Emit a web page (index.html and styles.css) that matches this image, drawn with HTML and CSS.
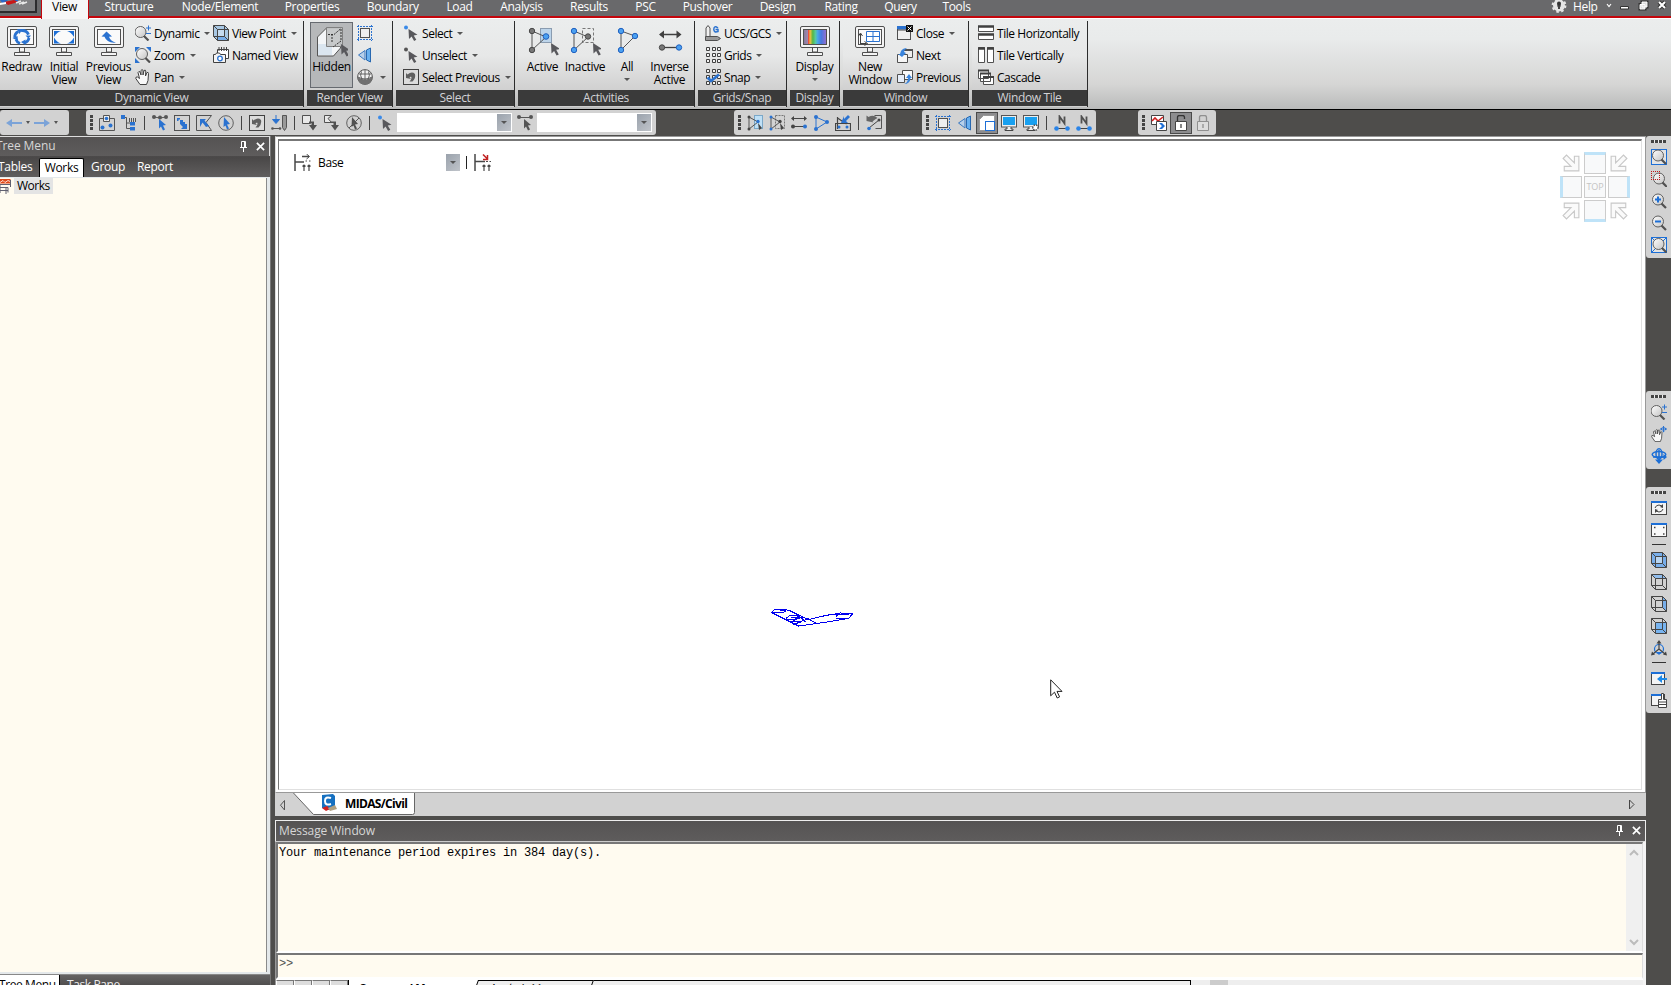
FILE: index.html
```html
<!DOCTYPE html>
<html lang="en">
<head>
<meta charset="utf-8">
<title>MIDAS/Civil</title>
<link rel="stylesheet" href="styles.css">
</head>
<body>
<svg class="defs" width="0" height="0">
<defs>
<linearGradient id="gl" x1="0" y1="0" x2="1" y2="1"><stop offset="0" stop-color="#fff"/><stop offset="1" stop-color="#c4c4c4"/></linearGradient>
<linearGradient id="rain" x1="0" x2="1" y1="0" y2="0"><stop offset="0" stop-color="#8a7a9c"/><stop offset=".18" stop-color="#a08ab0"/><stop offset=".2" stop-color="#e84a3c"/><stop offset=".28" stop-color="#f0c040"/><stop offset=".4" stop-color="#50b848"/><stop offset=".52" stop-color="#58c8a0"/><stop offset=".62" stop-color="#48a8e8"/><stop offset=".78" stop-color="#4878e0"/><stop offset="1" stop-color="#9070d0"/></linearGradient>
<g id="mon"><rect x=".5" y=".5" width="29" height="21" rx="1.500" fill="#f4f4f4" stroke="#505050"/><rect x="3.500" y="3.500" width="23" height="15" fill="#fafafa" stroke="#505050"/><path d="M12.500 22v4h5v-4M7.500 26.500h15v3h-15z" fill="#f4f4f4" stroke="#505050"/></g>
<g id="mag"><circle cx="7" cy="6.500" r="5.500" fill="url(#gl)" stroke="#606060"/><path d="M10.500 10.500l4.500 4.500" stroke="#505050" stroke-width="2.200"/></g>
<path id="cur" d="M0 0l9 6-3.800.8 2.600 4.600-2.200 1.200-2.500-4.700L.5 10.500z" fill="#58585c"/>
<g id="cube" fill="none" stroke="#454545"><path d="M.5.500h11l4 4v11h-11l-4-4z"/><path d="M4.500 4.500h11M4.500 4.500v11M4.500 4.500l-4-4M.5 11.500h11V.500M11.500 11.500l4 4"/></g>
</defs>
<symbol id="i-redraw" viewBox="0 0 30 30"><use href="#mon"/><path d="M7.800 11.500a7 6.500 0 0 1 3.500-6M14 4.600a7 6.500 0 0 1 7.500 4M22 12a7 6.500 0 0 1-4.500 5M13 17.500a7 6.500 0 0 1-4-4" fill="none" stroke="#2a72d0" stroke-width="2.800"/><path d="M10 3h5.500l-3 5zM18.500 9.500h5.500l-2.500 3zM18.500 13.500v5.500l-4.500-3zM5.500 12l5-2 .5 5z" fill="#2a72d0"/></symbol>
<symbol id="i-initial" viewBox="0 0 30 30"><use href="#mon"/><path d="M5 5h7q-4 1-7 6zM25 5h-7q4 1 7 6zM5 17.500h7q-4-1-7-6zM25 17.500h-7q4-1 7-6z" fill="#1d6fd6"/></symbol>
<symbol id="i-prev" viewBox="0 0 30 30"><use href="#mon"/><path d="M7.500 10.500l5-5 5.500 5-3 .3q1.500 4.500 7 5.700-9 1-11.500-5.700z" fill="#2a72d0"/></symbol>
<symbol id="i-display" viewBox="0 0 30 30"><use href="#mon"/><rect x="4" y="4" width="22" height="14" fill="url(#rain)"/></symbol>
<symbol id="i-newwin" viewBox="0 0 30 30"><use href="#mon"/><path d="M11.500 5.500h13v10h-13zM18 5.500v10M11.500 10.500h13" fill="#fff" stroke="#2a72d0"/><path d="M5.500 18V8m-2 2l2-3 2 3M5.500 17.500h6m-2-2l3 2-3 2" fill="none" stroke="#404040"/></symbol>
<symbol id="i-hidden" viewBox="0 0 32 32"><path d="M1.500 11l9-9h14v20l-7 8h-16z" fill="#f4f6f8" stroke="#555"/><path d="M2 18h14v11H2z" fill="#dbe6f0"/><path d="M10.500 1.500h16v19h-16z" fill="#c2c4c6" fill-opacity=".92" stroke="#808080"/><path d="M25 3v12l-8 6M12 8.500h6l7-6M16 8v8" fill="none" stroke="#333" stroke-dasharray="2 1"/><use href="#cur" transform="translate(25 18)"/></symbol>
<symbol id="i-active" viewBox="0 0 32 32"><rect x="13.500" y="2.500" width="11" height="14" fill="#bcd4ea" stroke="#8a9cb0"/><path d="M5 5l14 6L5 24z" fill="none" stroke="#555"/><g fill="#777" stroke="#484848"><circle cx="5" cy="5" r="2.700"/><circle cx="5" cy="24" r="2.700"/></g><circle cx="19" cy="10.500" r="2.800" fill="#4aa0f0" stroke="#2060c0"/><use href="#cur" transform="translate(24 17)"/></symbol>
<symbol id="i-inactive" viewBox="0 0 32 32"><rect x="13.500" y="2.500" width="11" height="14" fill="none" stroke="#777" stroke-dasharray="3 2"/><path d="M5 5l14 6L5 24z" fill="none" stroke="#555"/><g fill="#4aa0f0" stroke="#2060c0"><circle cx="5" cy="5" r="2.700"/><circle cx="5" cy="24" r="2.700"/></g><circle cx="19" cy="10.500" r="2.700" fill="#777" stroke="#484848"/><use href="#cur" transform="translate(24 17)"/></symbol>
<symbol id="i-all" viewBox="0 0 32 32"><path d="M10 5l14 5-14 14z" fill="none" stroke="#555"/><g fill="#4aa0f0" stroke="#2060c0"><circle cx="10" cy="5" r="2.700"/><circle cx="10" cy="24" r="2.700"/><circle cx="24" cy="10" r="2.700"/></g></symbol>
<symbol id="i-inverse" viewBox="0 0 32 32"><path d="M6 8.500h20" stroke="#404040" stroke-width="1.500"/><path d="M5 8.500l5-4v8zM27.500 8.500l-5-4v8z" fill="#404040"/><path d="M8 21.500h16" stroke="#404040" stroke-width="1.300"/><circle cx="8" cy="21.500" r="2.700" fill="#777" stroke="#484848"/><circle cx="25" cy="21.500" r="2.700" fill="#4aa0f0" stroke="#2060c0"/></symbol>
<symbol id="i-dynamic" viewBox="0 0 16 16"><use href="#mag" transform="translate(-1.500 .5)"/><path d="M11 3h5M13.500.5v5M11 8.500h5" stroke="#2a72d0"/></symbol>
<symbol id="i-zoom" viewBox="0 0 16 16"><path d="M0 0h5L0 5zM16 0h-5l5 5zM0 16h5l-5-5z" fill="#2a72d0"/><use href="#mag" transform="translate(0 .5)"/></symbol>
<symbol id="i-pan" viewBox="0 0 16 16"><path d="M5 15.500L.8 9.500Q.5 7.500 2.500 8l2 1.500-1.500-6Q4 1.500 5 3l1 3V1.500Q7-.3 8 1.300V6l1-4.500q1.500-1 1.800.5L10.500 7 12 3.500q1.500-.5 1.500 1l-.5 7-1.500 4z" fill="#f8f8f8" stroke="#404040"/></symbol>
<symbol id="i-viewpt" viewBox="0 0 16 16"><path d="M.5.500h11l4 4v11h-11l-4-4z" fill="#a8c8e4"/><rect x="4.500" y="4.500" width="7" height="7" fill="#c6dcf0"/><path d="M4.500 12h7l4 3.500h-11z" fill="#78aeea"/><use href="#cube"/></symbol>
<symbol id="i-named" viewBox="0 0 16 16"><path d="M4.500 2.500h11v9h-11z" fill="#fff" stroke="#404040"/><path d="M6 0v4M8.500 0v4M11 0v4M13.500 0v4" stroke="#404040"/><path d="M.5 7.500h2l1-1.500h3l1 1.500h5v8H.5z" fill="#f4f4f4" stroke="#404040"/><circle cx="7" cy="11.500" r="2.300" fill="#fff" stroke="#2a72d0" stroke-width="1.300"/></symbol>
<symbol id="i-wire" viewBox="0 0 16 16"><rect x="3.500" y="3.500" width="9" height="9" fill="#eee" stroke="#505050"/><path d="M0 1.500h16M0 14.500h16M1.500 0v16M14.500 0v16" stroke="#2a72d0" stroke-dasharray="2 1"/></symbol>
<symbol id="i-persp" viewBox="0 0 16 16"><path d="M8 3.500L1.500 8 8 13z" fill="#b8d0ea" stroke="#3a78c0"/><path d="M9.500 3l4-2v14l-4-2z" fill="#68b0f0" stroke="#2868b0"/></symbol>
<symbol id="i-globe" viewBox="0 0 16 16"><circle cx="8" cy="8" r="7.400" fill="#f2f2f2" stroke="#555"/><path d="M.6 8q7.400 5 14.800 0 0 7.400-7.400 7.400T.6 8z" fill="#707070"/><path d="M8 1v10M1 8q7 4 14 0M4.500 2.500Q2.500 6 5 10.500M11.500 2.500Q13.500 6 11 10.500M2 5h12" fill="none" stroke="#555" stroke-width=".9"/></symbol>
<symbol id="i-sel" viewBox="0 0 16 16"><circle cx="3" cy="2.500" r="2" fill="#3a8ae8"/><use href="#cur" transform="translate(5.500 4) scale(1 .95)"/></symbol>
<symbol id="i-unsel" viewBox="0 0 16 16"><circle cx="3" cy="2.500" r="2" fill="#555"/><use href="#cur" transform="translate(5.500 4) scale(1 .95)"/></symbol>
<symbol id="i-selprev" viewBox="0 0 16 16"><rect x=".5" y=".5" width="15" height="15" fill="#dcdcdc" stroke="#404040"/><path d="M3 9V4l1.500 1.500Q9 2 12 5q1 4-2.500 7.500-2 0-3 0Q9.500 9 8 7.500L6.500 8.500 8 10z" fill="#606060"/></symbol>
<symbol id="i-ucs" viewBox="0 0 16 16"><path d="M1 12V3l2-2.500L5 3v9z" fill="#f0f0f0" stroke="#505050"/><path d="M.5 11.500h12l3 2-3 2H.5z" fill="#999" stroke="#505050"/><path d="M13 3Q9 0 8.800 4.500 9 8 13 6.500V4.500h-2.500" fill="none" stroke="#2a72d0" stroke-width="1.500"/></symbol>
<symbol id="i-grid" viewBox="0 0 16 16"><g fill="#f4f4f4" stroke="#404040"><path d="M1.500.5h3v3h-3zM7.500.5h3v3h-3zM12.500.5h3v3h-3zM1.500 6.500h3v3h-3zM7.500 6.500h3v3h-3zM12.500 6.500h3v3h-3zM1.500 12.500h3v3h-3zM7.500 12.500h3v3h-3zM12.500 12.500h3v3h-3z"/></g></symbol>
<symbol id="i-snap" viewBox="0 0 16 16"><use href="#i-grid" width="16" height="16"/><path d="M2.500 8.500l3.500 3.500 8-6.500" fill="none" stroke="#2a72d0" stroke-width="2.600"/></symbol>
<symbol id="i-closew" viewBox="0 0 16 16"><rect x=".5" y="2.500" width="13" height="12" fill="#f0f0f0" stroke="#505050"/><path d="M0 1h10v3.500H0z" fill="#2a72d0"/><path d="M0 5h9" stroke="#444"/><path d="M9 0h7v7H9z" fill="#111"/><path d="M10.500 1.500l4 4m0-4l-4 4" stroke="#fff"/></symbol>
<symbol id="i-next" viewBox="0 0 16 16"><path d="M6.500 2.500h9v8h-9z" fill="#eee" stroke="#505050"/><path d="M6 3h10" stroke="#505050" stroke-width="2"/><path d="M.5 7.500h10v8H.5z" fill="#f6f6f6" stroke="#505050"/><path d="M3 7l1-3q2-3 6-3-3 2-3 4l2 1-4 4-4-3z" fill="#3a84dc"/></symbol>
<symbol id="i-prevw" viewBox="0 0 16 16"><path d="M5.500 1.500h10v9h-10z" fill="#fafafa" stroke="#505050"/><path d="M.5 5.500h7v8h-7z" fill="#e6eefa" stroke="#505050"/><path d="M7 15q4-1 4-6H9l3-4 3 4h-1.500Q13 15 7 15z" fill="#3a84dc"/></symbol>
<symbol id="i-tileh" viewBox="0 0 16 16"><path d="M.5 1.500h15v5H.5zM.5 9.500h15v5H.5z" fill="#fff" stroke="#505050"/><path d="M0 1.500h16M0 9.500h16" stroke="#404040" stroke-width="2.500"/></symbol>
<symbol id="i-tilev" viewBox="0 0 16 16"><path d="M.5.500h6v15h-6zM9.500.5h6v15h-6z" fill="#fff" stroke="#505050"/><path d="M0 1.500h7M9 1.500h7" stroke="#404040" stroke-width="2.500"/></symbol>
<symbol id="i-casc" viewBox="0 0 16 16"><g fill="#fff" stroke="#505050"><path d="M.5 1.500h10v8H.5zM2.500 4.500h10v8h-10zM5.500 7.500h10v8h-10z"/></g><path d="M0 1.500h11M2 4.500h11M5 8h11" stroke="#404040" stroke-width="2"/></symbol>
<symbol id="i-undo" viewBox="0 0 16 16"><path d="M0 8l6-4v3h10v2H6v3z" fill="#7ba3d8"/></symbol>
<symbol id="i-redo" viewBox="0 0 16 16"><path d="M16 8l-6-4v3H0v2h10v3z" fill="#7ba3d8"/></symbol>
<symbol id="i-t1" viewBox="0 0 16 16"><path d="M5 3.500H.5v12h15v-12H11" fill="none" stroke="#555"/><path d="M4.500.5h6v6h-6z" fill="#eee" stroke="#555"/><g fill="#2a72d0"><circle cx="7.500" cy="3.500" r="1.800"/><circle cx="3.500" cy="12.500" r="2"/><circle cx="11.500" cy="10.500" r="2"/></g></symbol>
<symbol id="i-t2" viewBox="0 0 16 16"><path d="M2.500 1.500v1h3v11h5M5.500 8h5M8.500 3v4M10.500 3v4M12.500 3v4M14.500 3v4" fill="none" stroke="#555"/><path d="M0 0h4v4H0zM9 7h5v3.500H9zM9 12h5v3.500H9z" fill="#2a72d0"/></symbol>
<symbol id="i-t3" viewBox="0 0 16 16"><path d="M2 2q6 2 12 0" fill="none" stroke="#555"/><g fill="#555"><circle cx="2" cy="2" r="2"/><circle cx="8" cy="2.500" r="2"/><circle cx="14" cy="2" r="2"/></g><path d="M7 4l7 6-3 .5 2 4-2 1-2-4-2 2z" fill="#2a72d0"/></symbol>
<symbol id="i-t4" viewBox="0 0 16 16"><rect x=".5" y=".5" width="15" height="15" fill="none" stroke="#505050"/><path d="M3 3h3v1.500H4.500V6H3zM6 5h3v2h2v2h2V7v7H7l2-2-3-3V7z" fill="#2a72d0"/></symbol>
<symbol id="i-t5" viewBox="0 0 16 16"><path d="M15.500.5H.5v15h15l-5.500-8z" fill="none" stroke="#505050"/><path d="M4 4h6l-1.500 1.500L13 11l-3 1-3.500-4.500L4 12z" fill="#2a72d0"/></symbol>
<symbol id="i-t6" viewBox="0 0 16 16"><circle cx="8" cy="8" r="7.300" fill="none" stroke="#606060"/><path d="M6 2l6 7-3 .5 2 4-2 1-1.500-4L5.500 12z" fill="#2a72d0"/></symbol>
<symbol id="i-t7" viewBox="0 0 16 16"><path d="M5 0v5M1.500 4.500h7L5 8.500z" fill="#2a72d0" stroke="#2a72d0"/><path d="M1 13.500h9" stroke="#555"/><circle cx="1.500" cy="13.500" r="1.300" fill="#555"/><circle cx="9" cy="13.500" r="1.300" fill="#555"/><path d="M11.500.5h4v12l-2 3-2-3z" fill="#999" stroke="#555"/></symbol>
<symbol id="i-t8" viewBox="0 0 16 16"><path d="M.5.500h8v8h-8z" fill="#e8e8e8" stroke="#505050"/><path d="M7 6.500h5V10h3l-4 5.500L7 10h2.500V8H7z" fill="#505050"/></symbol>
<symbol id="i-t9" viewBox="0 0 16 16"><path d="M7.500.5h-7v7h7l-3.500-4z" fill="#e8e8e8" stroke="#505050"/><path d="M7 6.500h5V10h3l-4 5.500L7 10h2.500V8H7z" fill="#505050"/></symbol>
<symbol id="i-t10" viewBox="0 0 16 16"><circle cx="8" cy="8" r="7.300" fill="none" stroke="#606060"/><path d="M6 2l6 7-3 .5 2 4-2 1-1.500-4L5.500 12z" fill="#505050"/><path d="M13 3L3 13" stroke="#555"/></symbol>
<symbol id="i-t11" viewBox="0 0 16 16"><path d="M2 2.500h12" stroke="#555"/><circle cx="2" cy="2" r="2" fill="#555"/><circle cx="14" cy="2" r="2" fill="#555"/><path d="M7 4l7 6-3 .5 2 4-2 1-2-4-2 2z" fill="#555"/></symbol>
<symbol id="i-a1" viewBox="0 0 16 16"><rect x="7.500" y=".5" width="8" height="13" fill="#bfe0f6" stroke="#7ba8c8"/><path d="M2 2l9 5-9 7z" fill="none" stroke="#555"/><circle cx="2" cy="2" r="1.500" fill="#444"/><circle cx="2" cy="14" r="1.500" fill="#444"/><circle cx="11" cy="6.500" r="1.700" fill="#2a72d0"/><path d="M11 8l4 5-3 2z" fill="#444"/></symbol>
<symbol id="i-a2" viewBox="0 0 16 16"><rect x="6.500" y=".5" width="9" height="13" fill="none" stroke="#777" stroke-dasharray="2 1"/><path d="M2 2l9 5-9 7z" fill="none" stroke="#555"/><circle cx="2" cy="2" r="1.500" fill="#2a72d0"/><circle cx="2" cy="14" r="1.500" fill="#2a72d0"/><circle cx="11" cy="6.500" r="1.700" fill="#444"/><path d="M11 8l4 5-3 2z" fill="#444"/></symbol>
<symbol id="i-a3" viewBox="0 0 16 16"><path d="M1 3.500h14M2 11.500h12" stroke="#444"/><path d="M0 3.500L3 1v5zM16 3.500L13 1v5z" fill="#444"/><circle cx="2" cy="11.500" r="2" fill="#444"/><circle cx="14" cy="11.500" r="2" fill="#2a72d0"/></symbol>
<symbol id="i-a4" viewBox="0 0 16 16"><path d="M3 2l11 5-11 7z" fill="none" stroke="#2a72d0"/><g fill="#2a72d0"><circle cx="3" cy="2" r="2"/><circle cx="3" cy="14" r="2"/><circle cx="14" cy="7" r="2"/></g></symbol>
<symbol id="i-a5" viewBox="0 0 16 16"><path d="M2.500 2v12M2.500 3l9 6M.5 8.500h15v7H.5z" fill="none" stroke="#444" stroke-width="1.200"/><path d="M13 0L9 4V1L6 8h7l-2-2 4-4z" fill="#2a72d0"/><circle cx="4" cy="12" r="1.500" fill="#2a72d0"/><circle cx="12" cy="12" r="1.500" fill="#2a72d0"/></symbol>
<symbol id="i-a6" viewBox="0 0 16 16"><path d="M8.500.5h7v13h-6" fill="none" stroke="#555"/><path d="M.5 6V.500l2 1.500q5-3 9 1Q9 4 6.500 6.500l1 1z" fill="#666"/><path d="M13 5L3 13" stroke="#444"/><circle cx="13" cy="5" r="1.500" fill="#444"/><circle cx="3" cy="13.500" r="1.800" fill="#2a72d0"/></symbol>
<symbol id="i-solid" viewBox="0 0 16 16"><path d="M.5 4.500l4-4h11V11l-4 4.500H.5z" fill="#fff" stroke="#999"/><rect x="6.500" y="6.500" width="9" height="9" fill="#fff" stroke="#1d6fd6"/></symbol>
<symbol id="i-scr" viewBox="0 0 16 16"><rect x=".5" y=".5" width="15" height="11.500" fill="#eee" stroke="#555"/><rect x="2" y="2" width="12" height="8" fill="#18a0f0"/><path d="M6 12v2H4v1.500h8V14h-2v-2" fill="#eee" stroke="#444"/></symbol>
<symbol id="i-scr2" viewBox="0 0 16 16"><use href="#i-scr" width="16" height="16"/><circle cx="12.500" cy="12.500" r="2.600" fill="#fff" stroke="#555" stroke-width="1.500" stroke-dasharray="1.500 1"/></symbol>
<symbol id="i-n" viewBox="0 0 16 16"><path d="M5.500 8.500v-7l5 7v-7" fill="none" stroke="#505050" stroke-width="1.800"/><path d="M2 13.500h12" stroke="#444"/><circle cx="2.500" cy="13.500" r="2.300" fill="#2a84e8"/><circle cx="13.500" cy="13.500" r="2.300" fill="#2a84e8"/></symbol>
<symbol id="i-rw" viewBox="0 0 16 16"><path d="M.5.500h12v9H.5z" fill="#fff" stroke="#444"/><path d="M1 6l3-3 3 3 5-4" fill="none" stroke="#d02020" stroke-width="1.600"/><path d="M5.500 6.500h10v9h-10z" fill="#fff" stroke="#444"/><path d="M8 8l3 3-3 3h3l3-3-3-3z" fill="#1d6fd6"/></symbol>
<symbol id="i-unlock" viewBox="0 0 16 16"><path d="M4.500 6V2.500q0-2 2-2h3q2 0 2 2V4" fill="none" stroke="#333" stroke-width="1.300"/><path d="M2.500 6.500h11v9h-11z" fill="#fff" stroke="#444"/><path d="M8 9v4" stroke="#444" stroke-width="1.300"/></symbol>
<symbol id="i-lock" viewBox="0 0 16 16"><path d="M4.500 6V2.500q0-2 2-2h3q2 0 2 2V6" fill="none" stroke="#909090" stroke-width="1.300"/><path d="M2.500 6.500h11v9h-11z" fill="#dedede" stroke="#909090"/><path d="M8 9v4" stroke="#909090" stroke-width="1.300"/></symbol>
<symbol id="i-pin" viewBox="0 0 9 12"><path d="M2.500 7V1.500h4V7M1 7.500h7M4.500 8v4M5.500 1.500V7" fill="none" stroke="#fff"/></symbol>
<symbol id="i-x" viewBox="0 0 10 10"><path d="M1 1l8 8m0-8L1 9" stroke="#fff" stroke-width="1.900"/></symbol>
<symbol id="i-r1" viewBox="0 0 16 16"><rect x=".5" y=".5" width="15" height="15" fill="#e4e4e4" stroke="#1d6fd6"/><use href="#mag"/></symbol>
<symbol id="i-r2" viewBox="0 0 16 16"><use href="#mag" transform="translate(1 1)"/><path d="M0 .5h9M.5 0v9M8.500 0v9M0 8.500h9" fill="none" stroke="#c01818" stroke-dasharray="1 1"/></symbol>
<symbol id="i-r3" viewBox="0 0 16 16"><use href="#mag"/><path d="M7 3.500v6M4 6.500h6" stroke="#1d6fd6" stroke-width="2"/></symbol>
<symbol id="i-r4" viewBox="0 0 16 16"><use href="#mag"/><path d="M4 6.500h6" stroke="#1d6fd6" stroke-width="2"/></symbol>
<symbol id="i-r5" viewBox="0 0 16 16"><rect x=".5" y=".5" width="15" height="15" fill="#e4e4e4" stroke="#1d6fd6"/><path d="M1 1l4 4M15 1l-4 4M1 15l4-4" stroke="#1d6fd6"/><use href="#mag" transform="translate(.5 .5)"/></symbol>
<symbol id="i-r7" viewBox="0 0 16 16"><use href="#i-pan" width="13" height="13" y="3"/><path d="M12.500 0v6M9.500 3h6" stroke="#2a72d0"/><path d="M12.500 0l1.500 2h-3zM12.500 6.500L14 4.500h-3zM9 3l2-1.500v3zM16 3l-2-1.500v3z" fill="#2a72d0"/></symbol>
<symbol id="i-r8" viewBox="0 0 16 16"><ellipse cx="8" cy="6.500" rx="6.800" ry="3" fill="none" stroke="#1d6fd6" stroke-width="1.500"/><ellipse cx="8" cy="6" rx="3" ry="5.200" fill="none" stroke="#1d6fd6" stroke-width="1.500"/><path d="M8 2v11M2 9h11" stroke="#1d6fd6" stroke-width="1.500"/><path d="M8 16l-4-4.500h8zM16 9l-3.500-3v6z" fill="#1d6fd6"/></symbol>
<symbol id="i-w1" viewBox="0 0 16 16"><rect x=".5" y="1.500" width="15" height="13" fill="#f4f4f4" stroke="#444"/><path d="M0 2h16" stroke="#1d6fd6" stroke-width="2"/><path d="M4 8q1-3 4-3l3 1M12 9q-1 3-4 3l-3-1" fill="none" stroke="#444"/><path d="M12 4v4L9 7zM4 13V9l3 1z" fill="#444"/></symbol>
<symbol id="i-w2" viewBox="0 0 16 16"><rect x=".5" y="1.500" width="15" height="13" fill="#f8f8f8" stroke="#444"/><path d="M0 2h16" stroke="#1d6fd6" stroke-width="2"/><path d="M3 5.500h1.500M12 5.500h1.500M3 12h1.500M12 12h1.500" stroke="#444" stroke-width="1.500"/></symbol>
<symbol id="i-c1" viewBox="0 0 16 16"><path d="M.5.500h11l4 4v11h-11l-4-4z" fill="#78aeea"/><path d="M4.500 4.500h7v7h-7z" fill="#b8d4f0"/><use href="#cube"/></symbol>
<symbol id="i-c2" viewBox="0 0 16 16"><path d="M.5.500h11l4 4h-11z" fill="#90bcec"/><use href="#cube"/></symbol>
<symbol id="i-c3" viewBox="0 0 16 16"><path d="M11.500.500l4 4v11l-4-4z" fill="#78aeea"/><use href="#cube"/></symbol>
<symbol id="i-c4" viewBox="0 0 16 16"><path d="M4.500 4.500h11v11h-11z" fill="#78b4f0"/><use href="#cube"/></symbol>
<symbol id="i-iso" viewBox="0 0 16 16"><circle cx="8" cy="9" r="4.500" fill="none" stroke="#1d6fd6" stroke-width="1.200"/><path d="M8 2v7L2 14M8 9l6 5" fill="none" stroke="#444" stroke-width="1.200"/><path d="M8 0l2.500 3.500h-5zM0 15.500l1-4 3 3zM16 15.500l-1-4-3 3z" fill="#444"/><path d="M5 12h6l-3 3z" fill="#1d6fd6"/></symbol>
<symbol id="i-w3" viewBox="0 0 16 16"><rect x=".5" y="2.500" width="13" height="12" fill="#f4f4f4" stroke="#444"/><path d="M0 3h14" stroke="#1d6fd6" stroke-width="2"/><path d="M6 9l5-4v3h5v2h-5v3z" fill="#1d8ae8"/></symbol>
<symbol id="i-w4" viewBox="0 0 16 16"><rect x=".5" y="2.500" width="13" height="11" fill="#f4f4f4" stroke="#444"/><path d="M0 3h12" stroke="#1d6fd6" stroke-width="2"/><path d="M7.500 7.500h3v-6h2v6h3v8h-8zM8 10h7M8 12.500h7" fill="#fff" stroke="#444"/></symbol>
<symbol id="i-base" viewBox="0 0 17 17"><path d="M1 0v17M1 8h9M8 2.500h7" stroke="#484848" stroke-width="1.500"/><path d="M12.500 0l3 2.500-3 2.500" fill="none" stroke="#484848"/><path d="M11.500 7h1.500M15 7h1.500M10 17v-6M8.500 12.500L10 11l1.500 1.500M15 17v-6M13.500 12.500L15 11l1.500 1.500" fill="none" stroke="#484848" stroke-width="1.200"/></symbol>
<symbol id="i-base2" viewBox="0 0 17 17"><path d="M1 0v17M1 7.500h10" stroke="#484848" stroke-width="1.500"/><path d="M9 .500l4 4M13.500 1v4.500H9" fill="none" stroke="#c02020" stroke-width="1.500"/><path d="M12 7.500h2M15.500 7.500h1.500M10 17v-6M8.500 12.500L10 11l1.500 1.500M15 17v-6M13.500 12.500L15 11l1.500 1.500" fill="none" stroke="#484848" stroke-width="1.200"/></symbol>
<symbol id="i-darr" viewBox="0 0 16 16"><path d="M1 4l3-3 7 7V2h4v13H2v-4h6z" fill="#fafafa" stroke="#c8c8c8"/></symbol>
</svg>

<nav class="menubar">
  <div class="app-btn"><svg width="32" height="9"><path d="M0 0h8l-5 4zM13 0h5v3z" fill="#2a68c8"/><path d="M4 2l10-2 4 2-10 3z" fill="#c81818"/><path d="M0 3l6-1v2l-6 1z" fill="#fff"/><path d="M16 3l5-2M19 4l5-2M22 4l5-2" stroke="#e8e8e8" stroke-width="1.500"/></svg></div>
  <div class="mtab on">View</div><div class="mtab w80">Structure</div><div class="mtab w103">Node/Element</div><div class="mtab w82">Properties</div><div class="mtab w79">Boundary</div><div class="mtab w54">Load</div><div class="mtab w70">Analysis</div><div class="mtab w65">Results</div><div class="mtab w48">PSC</div><div class="mtab w76">Pushover</div><div class="mtab w64">Design</div><div class="mtab w62">Rating</div><div class="mtab w58">Query</div><div class="mtab w55">Tools</div>
  <div class="winctl">
    <svg width="16" height="14" viewBox="0 0 16 14"><circle cx="8" cy="5.500" r="4" fill="none" stroke="#e4e4e4" stroke-width="4"/><circle cx="8" cy="5.500" r="6.200" fill="none" stroke="#e4e4e4" stroke-width="2.400" stroke-dasharray="2.400 2.470"/><path d="M8 3v6" stroke="#444" stroke-width="2"/><circle cx="8" cy="3.500" r="2" fill="#333"/></svg>
    <span>Help</span>
    <svg width="68" height="14" viewBox="0 0 68 14"><path d="M8 4l2 2.500L12 4" fill="none" stroke="#fff" stroke-width="1.200"/><path d="M21.500 6.500h8v2.500h-8z" fill="#fff" stroke="#333"/><path d="M43 2h5v5h-5zM41 4.500h5v4.500h-5z" fill="none" stroke="#333" stroke-width="3"/><path d="M43 2h5v5h-5zM41 4.500h5v4.500h-5z" fill="#ddd" stroke="#fff"/><path d="M60 2l6 6m0-6l-6 6" stroke="#333" stroke-width="4"/><path d="M60 2l6 6m0-6l-6 6" stroke="#fff" stroke-width="2"/></svg>
  </div>
</nav>

<section class="ribbon">
  <div class="panel p1"><div class="pbody">
    <div class="big w43"><svg><use href="#i-redraw"/></svg>Redraw</div>
    <div class="big w42"><svg><use href="#i-initial"/></svg>Initial<br>View</div>
    <div class="big w47"><svg><use href="#i-prev"/></svg>Previous<br>View</div>
    <div class="col c78"><div class="row"><svg><use href="#i-dynamic"/></svg>Dynamic<i></i></div><div class="row"><svg><use href="#i-zoom"/></svg>Zoom<i></i></div><div class="row"><svg><use href="#i-pan"/></svg>Pan<i></i></div></div>
    <div class="col"><div class="row"><svg><use href="#i-viewpt"/></svg>View Point<i></i></div><div class="row"><svg><use href="#i-named"/></svg>Named View</div></div>
  </div><div class="ptitle">Dynamic View</div></div>
  <div class="panel p2"><div class="pbody">
    <div class="big hid"><svg class="s32"><use href="#i-hidden"/></svg>Hidden</div>
    <div class="col"><div class="row"><svg><use href="#i-wire"/></svg></div><div class="row"><svg><use href="#i-persp"/></svg></div><div class="row"><svg><use href="#i-globe"/></svg><i></i></div></div>
  </div><div class="ptitle">Render View</div></div>
  <div class="panel p3"><div class="pbody">
    <div class="col"><div class="row"><svg><use href="#i-sel"/></svg>Select<i></i></div><div class="row"><svg><use href="#i-unsel"/></svg>Unselect<i></i></div><div class="row"><svg><use href="#i-selprev"/></svg>Select Previous<i></i></div></div>
  </div><div class="ptitle">Select</div></div>
  <div class="panel p4"><div class="pbody">
    <div class="big w43"><svg class="s32"><use href="#i-active"/></svg>Active</div>
    <div class="big w42"><svg class="s32"><use href="#i-inactive"/></svg>Inactive</div>
    <div class="big w42"><svg class="s32"><use href="#i-all"/></svg>All<i></i></div>
    <div class="big w43"><svg class="s32"><use href="#i-inverse"/></svg>Inverse<br>Active</div>
  </div><div class="ptitle">Activities</div></div>
  <div class="panel p5"><div class="pbody">
    <div class="col"><div class="row"><svg><use href="#i-ucs"/></svg>UCS/GCS<i></i></div><div class="row"><svg><use href="#i-grid"/></svg>Grids<i></i></div><div class="row"><svg><use href="#i-snap"/></svg>Snap<i></i></div></div>
  </div><div class="ptitle">Grids/Snap</div></div>
  <div class="panel p6"><div class="pbody"><div class="big w49"><svg><use href="#i-display"/></svg>Display<i></i></div></div><div class="ptitle">Display</div></div>
  <div class="panel p7"><div class="pbody">
    <div class="big w55"><svg><use href="#i-newwin"/></svg>New<br>Window</div>
    <div class="col"><div class="row"><svg><use href="#i-closew"/></svg>Close<i></i></div><div class="row"><svg><use href="#i-next"/></svg>Next</div><div class="row"><svg><use href="#i-prevw"/></svg>Previous</div></div>
  </div><div class="ptitle">Window</div></div>
  <div class="panel p8"><div class="pbody">
    <div class="col"><div class="row"><svg><use href="#i-tileh"/></svg>Tile Horizontally</div><div class="row"><svg><use href="#i-tilev"/></svg>Tile Vertically</div><div class="row"><svg><use href="#i-casc"/></svg>Cascade</div></div>
  </div><div class="ptitle">Window Tile</div></div>
</section>

<section class="tools">
  <div class="tb tb1"><svg><use href="#i-undo"/></svg><i></i><svg><use href="#i-redo"/></svg><i></i></div>
  <div class="tb tb2"><b></b><svg><use href="#i-t1"/></svg><svg><use href="#i-t2"/></svg><s></s><svg><use href="#i-t3"/></svg><svg><use href="#i-t4"/></svg><svg><use href="#i-t5"/></svg><svg><use href="#i-t6"/></svg><s></s><svg><use href="#i-selprev"/></svg><svg><use href="#i-t7"/></svg><s></s><svg><use href="#i-t8"/></svg><svg><use href="#i-t9"/></svg><svg><use href="#i-t10"/></svg><s></s><svg><use href="#i-sel"/></svg><div class="combo"><span><i></i></span></div><svg><use href="#i-t11"/></svg><div class="combo"><span><i></i></span></div></div>
  <div class="tb tb3"><b></b><svg><use href="#i-a1"/></svg><svg><use href="#i-a2"/></svg><svg><use href="#i-a3"/></svg><svg><use href="#i-a4"/></svg><svg><use href="#i-a5"/></svg><s></s><svg><use href="#i-a6"/></svg></div>
  <div class="tb tb4"><b></b><svg><use href="#i-wire"/></svg><svg><use href="#i-persp"/></svg><svg class="down"><use href="#i-solid"/></svg><svg><use href="#i-scr"/></svg><svg><use href="#i-scr2"/></svg><s></s><svg><use href="#i-n"/></svg><svg><use href="#i-n"/></svg></div>
  <div class="tb tb5"><b></b><svg><use href="#i-rw"/></svg><svg class="down"><use href="#i-unlock"/></svg><svg><use href="#i-lock"/></svg></div>
</section>

<main class="work">
  <aside class="tree">
    <div class="head"><span class="clip">Tree Menu</span><svg class="pin"><use href="#i-pin"/></svg><svg class="cls"><use href="#i-x"/></svg></div>
    <div class="ttabs"><span class="t1">Tables</span><span class="on">Works</span><span class="t3">Group</span><span>Report</span></div>
    <div class="tbody"><svg width="11" height="15" viewBox="0 0 11 15"><path d="M0 0h10.500v4.500H0z" fill="#e04818"/><path d="M0 3.500l3-2 2 2 3-2 2 1" stroke="#fff" fill="none" stroke-width=".8"/><path d="M0 5.500h10.500M0 8.500h8v5M0 11.500h8M6 8v7M10.500 1v7M0 5v9" stroke="#606070" fill="none"/></svg><span>Works</span></div>
    <div class="btabs"><span class="on">Tree Menu</span><span>Task Pane</span></div>
  </aside>

  <div class="center">
    <div class="view">
      <div class="canvas">
        <div class="stage"><svg width="17" height="17"><use href="#i-base"/></svg><span class="base">Base</span><div class="dd"><i></i></div><div class="bar"></div><svg width="17" height="17"><use href="#i-base2"/></svg></div>
        <div class="navcube">
          <svg><use href="#i-darr"/></svg><div class="face top"></div><svg class="a1"><use href="#i-darr"/></svg>
          <div class="face left"></div><div class="face mid">TOP</div><div class="face right"></div>
          <svg class="a2"><use href="#i-darr"/></svg><div class="face bottom"></div><svg class="a3"><use href="#i-darr"/></svg>
        </div>
        <svg class="model" width="84" height="20" viewBox="0 0 84 20" fill="none" stroke="#0000f0" shape-rendering="crispEdges"><path d="M.5 3.500l3-3h10l5 1 8 4 11 5 15-3.500 17-3 12 1-4 4.500-25 4-25 3.500z"/><path d="M.5 3.500h12l2-1.500M9 1.500h6M15 9.500l3-2.500 9-1M14 10.500h10l6-2M19 12.500h11l8-3M26.500 6l5 4 3 3M28 6.500l-6 6M37.500 10l7 4M20 8.500h12M22 15.500l9-3M57 5.500h13l8 0M68 4l-3 4M65 9h12"/></svg>
        <svg class="cursor" width="13" height="20" viewBox="0 0 13 20"><path d="M.7.800v16l3.800-3.600 2.700 5.800 2.400-1.100-2.600-5.500h5z" fill="#fff" stroke="#222"/></svg>
      </div>
    </div>
    <div class="doctabs"><svg width="142" height="23" viewBox="0 0 142 23"><path d="M9.500 7.500v9.500L5.500 12.200z" fill="none" stroke="#555"/><path d="M18-.5h121.500v20q0 2-2 2H38.500z" fill="#fff" stroke="#666"/><path d="M47 2l11-1 2 2v10l-5 4-8-2z" fill="#1670c0"/><path d="M56 5q-6-2-6 3t6 3" fill="none" stroke="#fff" stroke-width="2"/><path d="M47 15l5-2 3 3-4 2z" fill="#d02020"/><path d="M53 15l7-3 2 4-7 2z" fill="#b0a080"/></svg><span>MIDAS/Civil</span><svg class="ra" width="6" height="11"><path d="M.5 1v9L5 5.500z" fill="none" stroke="#444"/></svg></div>
    <section class="msg">
      <div class="head"><span>Message Window</span><svg class="pin"><use href="#i-pin"/></svg><svg class="cls"><use href="#i-x"/></svg></div>
      <div class="mframe">
        <div class="log"><pre>Your maintenance period expires in 384 day(s).</pre><div class="sb"><svg width="10" height="7"><path d="M1 6l4-4 4 4" fill="none" stroke="#bcbcbc" stroke-width="2"/></svg><svg width="10" height="7"><path d="M1 1l4 4 4-4" fill="none" stroke="#bcbcbc" stroke-width="2"/></svg></div></div>
        <div class="cmd"><pre>&gt;&gt;</pre></div>
        <div class="sheets"><em></em><em></em><em></em><em></em><div class="sh s1">Command Message</div><div class="sh s2">Analysis Message</div><div class="rest"></div><div class="hs"></div></div>
      </div>
    </section>
  </div>

  <aside class="rail">
    <div class="vt v1"><b></b><svg><use href="#i-r1"/></svg><svg><use href="#i-r2"/></svg><svg><use href="#i-r3"/></svg><svg><use href="#i-r4"/></svg><svg><use href="#i-r5"/></svg></div>
    <div class="vt v2"><b></b><svg><use href="#i-dynamic"/></svg><svg><use href="#i-r7"/></svg><svg><use href="#i-r8"/></svg></div>
    <div class="vt v3"><b></b><svg><use href="#i-w1"/></svg><svg><use href="#i-w2"/></svg><s></s><svg><use href="#i-c1"/></svg><svg><use href="#i-c2"/></svg><svg><use href="#i-c3"/></svg><svg><use href="#i-c4"/></svg><svg><use href="#i-iso"/></svg><s></s><svg><use href="#i-w3"/></svg><svg><use href="#i-w4"/></svg></div>
  </aside>
</main>
</body>
</html>
```
FILE: styles.css
```css
* { box-sizing: border-box; }
body { margin: 0; width: 1671px; height: 985px; overflow: hidden; display: flex; flex-direction: column; background: #4e4d4b; font: 12px/13px "Open Sans", "Noto Sans", sans-serif; letter-spacing: -0.35px; color: #000; }
.defs { position: absolute; }
svg { flex: none; display: block; }
i { flex: none; width: 0; height: 0; border: 3px solid transparent; border-top: 3px solid #555; border-bottom: 0; }

/* menu bar */
.menubar { height: 18px; flex: none; display: flex; background: #69696b; border-bottom: 2px solid #c4060c; color: #fff; position: relative; z-index: 1; }
.app-btn { width: 37px; height: 13px; margin-right: 4px; background: #808082; border: solid #2c2c2e; border-width: 0 2px 2px 0; }
.mtab { height: 14px; line-height: 14px; text-align: center; white-space: nowrap; flex: none; }
.mtab.on { width: 48px; height: 19px; background: #f6f7f7; color: #000; border: solid #c4060c; border-width: 0 1px; padding-right: 1px; }
.w80 { width: 80px; } .w103 { width: 102px; } .w82 { width: 82px; } .w79 { width: 79.500px; } .w54 { width: 54px; } .w70 { width: 70px; } .w65 { width: 65px; } .w48 { width: 48px; } .w76 { width: 76px; } .w64 { width: 64.500px; } .w62 { width: 62px; } .w58 { width: 57px; }
.w55 { width: 55px; }
.winctl { margin-left: auto; display: flex; padding-right: 4px; line-height: 14px; gap: 2px; }
.winctl span { width: 28px; padding-left: 4px; white-space: nowrap; }

/* ribbon */
.ribbon { height: 92px; flex: none; display: flex; padding-top: 2px; border-bottom: 1px solid #000; border-top: 1px solid #fff; background: linear-gradient(#ebeded 0, #e9ebeb 20px, #d6d6d5 65px, #b9baba 90px); }
.panel { height: 86px; flex: none; border-right: 1px solid #2c2c2c; margin-right: 3px; display: flex; flex-direction: column; background: linear-gradient(#ebeded, #e7e8e8 40%, #cfcfcf 82%); }
.pbody { height: 69px; display: flex; }
.ptitle { height: 16px; line-height: 15px; background: #3a3a3a; color: #d2d2d6; text-align: center; }
.p1 { width: 304px; } .p2 { width: 86px; } .p3 { width: 119px; } .p4 { width: 177px; } .p5 { width: 89px; } .p6 { width: 50px; } .p7 { width: 126px; } .p8 { width: 116px; }
.big { flex: none; text-align: center; padding-top: 5px; white-space: nowrap; }
.big svg { width: 30px; height: 30px; margin: 0 auto 4px; }
.big svg.s32 { width: 32px; height: 32px; margin-bottom: 2px; }
.big i { display: block; width: 0; margin: 5px auto 0; }
.w43 { width: 43px; } .w42 { width: 42px; } .w47 { width: 47px; } .w49 { width: 49px; } .p7 .w55 { width: 54px; }
.hid { width: 43px; height: 66px; margin: 1px 4px 0 3px; padding-top: 3px; border: 1px solid #666a70; background: #b6b8ba; }
.col { flex: none; padding-top: 1px; }
.row { height: 22px; display: flex; align-items: center; white-space: nowrap; letter-spacing: -.45px; }
.row svg { width: 16px; height: 16px; margin-right: 3px; }
.row i { margin-left: 5px; }
.c78 { width: 78px; }
.p1 .col { margin-left: 3px; } .p1 .col + .col { margin-left: 0; }
.p3 .col { margin-left: 7px; } .p4 .pbody { padding-left: 3px; } .p5 .col { margin-left: 7px; } .p8 .col { margin-left: 6px; }
.p2 .row i { margin-left: 4px; }

/* toolbars */
.tools { height: 26px; flex: none; display: flex; }
.tb { height: 25px; display: flex; align-items: center; background: #d2d2d2; border-radius: 3px; flex: none; }
.tb svg { width: 16px; height: 16px; margin: 0 3px; }
.tb b { width: 3px; height: 15px; margin: 0 3px 0 4px; background: repeating-linear-gradient(#444 0 3px, transparent 3px 4px); }
.tb s { width: 1px; height: 14px; background: #444; margin: 0 4px; }
.tb1 { width: 69px; padding-left: 3px; } .tb1 i { margin: 0 1px; }
.tb1 i { border-width: 3px 2.500px 0; }
.tb2 { width: 570px; margin-left: 17px; }
.combo { width: 115px; height: 19px; background: #fff; margin: 0 2px 0 1px; display: flex; justify-content: flex-end; }
.combo span, .dd { width: 14px; height: 17px; margin: 1px; background: linear-gradient(135deg, #9aa2ac, #c0c4ca); display: flex; align-items: center; justify-content: center; }
.tb3 { width: 152px; margin-left: 78px; }
.tb4 { width: 174px; margin-left: 36px; }
.tb5 { width: 78px; margin-left: 42px; }
.tb svg.down { width: 20px; height: 20px; padding: 2px; margin: 0 1px; background: #8c8c8e; outline: 1px solid #4a4a4a; }

/* work area */
.work { flex: 1; min-height: 0; display: flex; }
.head { display: flex; align-items: center; color: #d6d6d6; background: linear-gradient(#555353, #5e5c5c); letter-spacing: -.1px; }
.head span { margin: -2px auto 0 0; }
.pin { width: 9px; height: 12px; margin-top: -2px; } .cls { width: 9px; height: 9px; margin: -1px 4px 0 8px; }
.tree { width: 271px; flex: none; display: flex; flex-direction: column; overflow: hidden; background: linear-gradient(#5c5a5a, #4a4848 22px, #605e5e 41px); border-right: 1px solid #777; }
.tree .head { height: 20px; flex: none; border-top: 1px solid #ddd; border-right: 1px solid #ddd; }
.head .clip { margin-left: -4px; }
.ttabs { height: 21px; flex: none; display: flex; color: #fff; padding-top: 2px; line-height: 17px; letter-spacing: -.3px; }
.ttabs .t1 { width: 40px; margin-left: -2px; white-space: nowrap; }
.ttabs .on { width: 45px; text-align: center; background: #fff; color: #000; border: 1px solid #000; border-width: 1px 1px 0; margin-right: 7px; border-radius: 2px 2px 0 0; margin-left: 1px; }
.ttabs .t3 { width: 46px; }
.tbody { flex: 1; background: #fffbf0; border: solid #e4e8ea; border-width: 1px 3px 2px 0; display: flex; align-items: flex-start; box-shadow: inset -1px 0 #8a8a8a; }
.tbody svg { margin-top: 1px; }
.tbody span { background: #e4e4e4; height: 16px; line-height: 16px; padding: 0 3px; margin-left: 3px; letter-spacing: -.5px; }
.btabs { height: 11px; flex: none; display: flex; border-top: 1px solid #888; color: #eee; background: linear-gradient(#656363, #504e4e); white-space: nowrap; line-height: 20px; overflow: hidden; letter-spacing: -.4px; }
.btabs .on { width: 60px; background: #fff; color: #000; margin-right: 7px; border-right: 1px solid #000; text-indent: -1px; }
.center { width: 1371px; margin-left: 4px; flex: none; display: flex; flex-direction: column; }
.view { height: 657px; flex: none; background: #fff; border: 1px solid #999; border-left-color: #ddd; padding: 2px; }
.canvas { position: relative; height: 100%; margin-right: 1px; background: #fff; border: 1px solid #e0e0e0; border-top: 2px solid #777; border-left: 1px solid #777; }
.stage { display: flex; align-items: center; padding: 13px 0 0 15px; }
.base { width: 134px; padding-left: 7px; }
.stage .dd { margin: 0 0 0 1px; }
.bar { width: 1px; height: 13px; background: #222; margin: 0 7px 0 6px; }
.navcube { position: absolute; right: 11px; top: 11px; display: grid; grid-template: repeat(3, 22px) / repeat(3, 22px); gap: 2px; place-items: center; }
.navcube svg { width: 18px; height: 18px; }
.a1 { transform: scaleX(-1); } .a2 { transform: scaleY(-1); } .a3 { transform: scale(-1); }
.face { width: 22px; height: 22px; background: #f8f9fa; border: 1px solid #ccc; font-size: 9px; line-height: 20px; text-align: center; color: #c4c4c4; letter-spacing: -.2px; }
.top { border-top: 3px solid #bfe3f8; } .bottom { border-bottom: 3px solid #bfe3f8; } .left { border-left: 3px solid #bfe3f8; } .right { border-right: 3px solid #bfe3f8; }
.model { position: absolute; left: 492px; top: 468px; overflow: visible; }
.cursor { position: absolute; left: 771px; top: 538px; }
.doctabs { height: 23px; flex: none; display: flex; align-items: center; background: #d2d2d2; }
.doctabs span { margin: -3px 0 0 -72px; font-weight: 700; letter-spacing: -.65px; }
.ra { margin-left: auto; margin-right: 11px; }
.msg { flex: 1; min-height: 0; margin-top: 4px; display: flex; flex-direction: column; }
.msg .head { height: 21px; flex: none; border: 1px solid #eee; border-bottom: 0; padding-left: 3px; }
.mframe { flex: 1; min-height: 0; padding-left: 1px; background: #999; border-top: 1px solid #ccc; border-right: 3px solid #f4f4f4; display: flex; flex-direction: column; overflow: hidden; }
.log { height: 111px; flex: none; display: flex; justify-content: space-between; background: #fffbf0; border: solid #777; border-width: 2px 1px 2px 2px; border-right-color: #ddd; border-bottom-color: #fff; }
pre { margin: 0; font: 12px/13px "Liberation Mono", monospace; letter-spacing: -.2px; padding: 3px 0 0 1px; }
.sb { width: 16px; background: #f0f0f0; display: flex; flex-direction: column; justify-content: space-between; align-items: center; padding: 5px 0; }
.cmd { height: 26px; flex: none; background: #fffbf0; border: solid #777; border-width: 2px 1px 2px 2px; border-bottom-color: #fff; border-right-color: #ddd; }
.cmd pre { color: #555; }
.sheets { height: 8px; flex: none; display: flex; background: #eee; overflow: hidden; border-top: 1px solid #fff; }
.sheets em { width: 18px; background: #ddd; border: 1px solid #777; border-left-color: #fff; border-bottom: 0; height: 12px; }
.sh { flex: none; height: 17px; line-height: 15px; font-size: 11px; padding-left: 10px; white-space: nowrap; }
.s1 { width: 130px; background: #fff; border-left: 1px solid #000; font-weight: 700; } .s2 { width: 116px; background: #eee; border: 1px solid #000; padding-left: 13px; line-height: 13px; transform: skewX(-20deg); transform-origin: 0 0; }
.rest { width: 597px; border: 1px solid #000; border-left: 0; height: 12px; }
.hs { margin-left: 19px; width: 18px; background: #ccc; height: 12px; }

/* right rail */
.rail { flex: 1; display: flex; flex-direction: column; }
.vt { flex: none; background: #d2d2d2; border-radius: 3px 0 0 3px; display: flex; flex-direction: column; align-items: center; }
.vt b { width: 15px; height: 3px; margin: 4px 0 3px; background: repeating-linear-gradient(90deg, #444 0 3px, #eee 3px 4px); }
.vt svg { width: 16px; height: 16px; margin: 3px 0; }
.vt s { width: 14px; height: 1px; background: #333; margin: 3px 0 4px; }
.v1 { height: 122px; } .v2 { height: 78px; margin-top: 133px; } .v3 { height: 226px; margin-top: 18px; }
```
